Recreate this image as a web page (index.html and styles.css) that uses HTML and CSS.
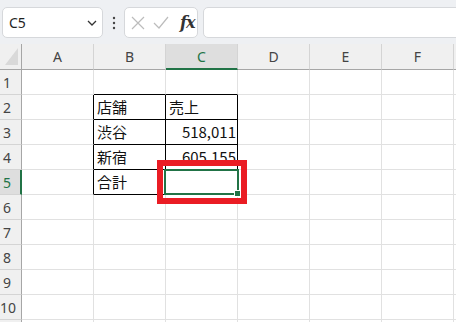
FILE: index.html
```html
<!DOCTYPE html>
<html lang="ja">
<head>
<meta charset="utf-8">
<link rel="stylesheet" href="styles.css">
</head>
<body>
<div class="app">
  <div class="toolbar">
    <div class="namebox">
      <span class="ref">C5</span>
      <svg class="chev" width="10" height="6" viewBox="0 0 10 6"><path d="M1 1 L5 5 L9 1" fill="none" stroke="#333" stroke-width="1.3"/></svg>
    </div>
    <div class="dots">
      <svg width="4" height="14" viewBox="0 0 4 14"><circle cx="2" cy="2" r="1.2" fill="#444"/><circle cx="2" cy="7" r="1.2" fill="#444"/><circle cx="2" cy="12" r="1.2" fill="#444"/></svg>
    </div>
    <div class="fbuttons">
      <svg class="ico" width="14" height="14" viewBox="0 0 14 14"><path d="M1 1 L13 13 M13 1 L1 13" stroke="#bcbcbc" stroke-width="1.2" fill="none"/></svg>
      <svg class="ico" width="16" height="14" viewBox="0 0 16 14"><path d="M1 7 L6 12 L15 1" stroke="#bcbcbc" stroke-width="1.2" fill="none"/></svg>
      <span class="fx">fx</span>
    </div>
    <div class="finput"></div>
  </div>

  <div class="sheet">
    <div class="corner"><svg width="22" height="25" viewBox="0 0 22 25"><polygon points="18,4 18,21 5,21" fill="#d9d9d9"/></svg></div>
    <div class="ch">A</div>
    <div class="ch">B</div>
    <div class="ch sel">C</div>
    <div class="ch">D</div>
    <div class="ch">E</div>
    <div class="ch">F</div>
    <div class="ch"></div>

    <div class="rh"><span>1</span></div>
    <div class="c"></div><div class="c tt"></div><div class="c tt"></div><div class="c"></div><div class="c"></div><div class="c"></div><div class="c"></div>

    <div class="rh"><span>2</span></div>
    <div class="c tl"></div><div class="c t">店舗</div><div class="c t">売上</div><div class="c"></div><div class="c"></div><div class="c"></div><div class="c"></div>

    <div class="rh"><span>3</span></div>
    <div class="c tl"></div><div class="c t">渋谷</div><div class="c t num">518,011</div><div class="c"></div><div class="c"></div><div class="c"></div><div class="c"></div>

    <div class="rh"><span>4</span></div>
    <div class="c tl"></div><div class="c t">新宿</div><div class="c t num">605,155</div><div class="c"></div><div class="c"></div><div class="c"></div><div class="c"></div>

    <div class="rh sel"><span>5</span></div>
    <div class="c tl"></div><div class="c t">合計</div><div class="c t num"></div><div class="c"></div><div class="c"></div><div class="c"></div><div class="c"></div>

    <div class="rh"><span>6</span></div>
    <div class="c"></div><div class="c"></div><div class="c"></div><div class="c"></div><div class="c"></div><div class="c"></div><div class="c"></div>

    <div class="rh"><span>7</span></div>
    <div class="c"></div><div class="c"></div><div class="c"></div><div class="c"></div><div class="c"></div><div class="c"></div><div class="c"></div>

    <div class="rh"><span>8</span></div>
    <div class="c"></div><div class="c"></div><div class="c"></div><div class="c"></div><div class="c"></div><div class="c"></div><div class="c"></div>

    <div class="rh"><span>9</span></div>
    <div class="c"></div><div class="c"></div><div class="c"></div><div class="c"></div><div class="c"></div><div class="c"></div><div class="c"></div>

    <div class="rh"><span>10</span></div>
    <div class="c"></div><div class="c"></div><div class="c"></div><div class="c"></div><div class="c"></div><div class="c"></div><div class="c"></div>

    <div class="rh"></div>
    <div class="c"></div><div class="c"></div><div class="c"></div><div class="c"></div><div class="c"></div><div class="c"></div><div class="c"></div>
  </div>

  <div class="selection"><div class="handle"></div></div>
  <div class="highlight"></div>
</div>
</body>
</html>
```

FILE: styles.css
```css
* { box-sizing: border-box; }
html, body {
  margin: 0;
  padding: 0;
  width: 456px;
  height: 322px;
  overflow: hidden;
  background: #ffffff;
}
.app {
  position: relative;
  width: 456px;
  height: 322px;
  overflow: hidden;
  font-family: "Noto Sans", "Noto Sans CJK JP", sans-serif;
}
.toolbar {
  height: 44px;
  padding: 7px 0 6px 2px;
  display: flex;
  background: #eef0f3;
}
.namebox {
  width: 101px;
  height: 31px;
  background: #fff;
  border: 1px solid #d6d8db;
  border-radius: 5px;
  display: flex;
  align-items: center;
  justify-content: space-between;
  padding: 0 5px 0 6px;
}
.ref {
  font-size: 14px;
  color: #1f1f1f;
}
.chev { margin-top: 1px; }
.dots {
  width: 21px;
  display: flex;
  align-items: center;
  justify-content: center;
}
.fbuttons {
  width: 74px;
  height: 31px;
  background: #fff;
  border: 1px solid #d6d8db;
  border-radius: 5px;
  display: flex;
  align-items: center;
  padding: 0 0 0 6px;
  gap: 8px;
}
.fx {
  font-family: "DejaVu Serif", "Liberation Serif", serif;
  font-style: italic;
  font-weight: bold;
  font-size: 16px;
  color: #333;
  margin-left: 3px;
  letter-spacing: -1px;
}
.finput {
  flex: 1;
  margin-left: 5px;
  margin-right: -10px;
  height: 31px;
  background: #fff;
  border: 1px solid #d6d8db;
  border-radius: 5px;
}
.sheet {
  display: grid;
  grid-template-columns: 22px repeat(7, 72px);
  grid-template-rows: 26px repeat(11, 25px);
  width: 526px;
}
.corner {
  background: #f0f0f0;
  border-right: 1px solid #a6a6a6;
  border-bottom: 1px solid #a6a6a6;
}
.corner svg { display: block; }
.ch {
  background: #f0f0f0;
  border-right: 1px solid #d4d4d4;
  border-bottom: 1px solid #a6a6a6;
  display: flex;
  align-items: center;
  justify-content: center;
  font-size: 14px;
  color: #444;
}
.ch.sel {
  background: #dedede;
  color: #217346;
  border-bottom: 2px solid #217346;
}
.rh {
  background: #f0f0f0;
  border-right: 1px solid #a6a6a6;
  border-bottom: 1px solid #d4d4d4;
  display: flex;
  align-items: center;
  font-size: 14px;
  color: #444;
}
.rh span {
  width: 14px;
  text-align: center;
  white-space: nowrap;
}
.rh.sel {
  background: #dedede;
  color: #217346;
  border-right: 2px solid #217346;
}
.c {
  border-right: 1px solid #e1e1e1;
  border-bottom: 1px solid #e1e1e1;
  display: flex;
  align-items: center;
  padding: 0 2px 1px 3px;
  font-family: "Noto Sans CJK JP", sans-serif;
  font-size: 15px;
  color: #111;
  white-space: nowrap;
}
.c.t {
  border-right-color: #000;
  border-bottom-color: #000;
}
.c.tl { border-right-color: #000; }
.c.tt { border-bottom-color: #000; }
.c.num {
  justify-content: flex-end;
  padding-right: 1px;
}
.selection {
  position: absolute;
  left: 164px;
  top: 169px;
  width: 75px;
  height: 26px;
  border: 2px solid #217346;
}
.handle {
  position: absolute;
  right: -4px;
  bottom: -4px;
  width: 7px;
  height: 7px;
  background: #217346;
  border: 1px solid #fff;
}
.highlight {
  position: absolute;
  left: 157px;
  top: 160px;
  width: 90px;
  height: 44px;
  border: 6px solid #ea1c24;
}
```
